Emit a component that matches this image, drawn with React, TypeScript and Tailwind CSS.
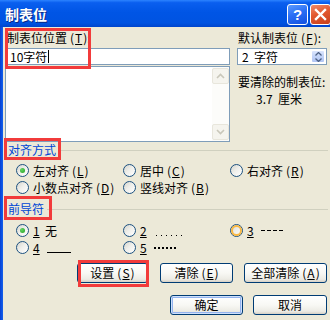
import React from "react";

function U({ c }: { c: string }) {
  return <span className="underline underline-offset-[1px] decoration-1">{c}</span>;
}

function Mn({ c }: { c: string }) {
  return (
    <span className="ml-[3px]">
      (<span className="px-[1px]"><U c={c} /></span>)
    </span>
  );
}

function Radio({ checked, hover }: { checked?: boolean; hover?: boolean }) {
  return (
    <span className="relative inline-flex w-[13px] h-[13px] shrink-0 items-center justify-center rounded-full border border-[#1c5180] bg-[linear-gradient(135deg,#d4d4cc_0%,#eeeeea_45%,#ffffff_100%)]">
      {hover && <span className="absolute inset-0 rounded-full border-2 border-[#f9b945]" />}
      {checked && (
        <span className="relative w-[5px] h-[5px] rounded-full bg-[radial-gradient(circle_at_35%_35%,#63d463,#21a121)]" />
      )}
    </span>
  );
}

function Btn({ cls, children, def }: { cls: string; children: React.ReactNode; def?: boolean }) {
  return (
    <div
      className={
        "h-[20px] shrink-0 rounded-[3px] border border-[#003c74] flex items-center justify-center text-[12px] leading-[12px] text-black bg-[linear-gradient(180deg,#ffffff_0%,#f8f8f4_50%,#ecebe4_85%,#d6d0c5_100%)] " +
        (def ? "shadow-[inset_0_0_0_1px_#cee0fb,inset_0_0_0_2px_#94b3ee] " : "") +
        cls
      }
    >
      {children}
    </div>
  );
}

export default function App() {
  return (
    <div className="relative w-[330px] h-[320px] overflow-hidden bg-[#ece9d8] font-['Noto_Sans_CJK_SC','Liberation_Sans',sans-serif] text-[12px] text-black">
      {/* Title bar */}
      <div className="h-[27px] flex items-center justify-between bg-[linear-gradient(180deg,#2c83ff_0%,#0a5fef_10%,#0055e5_45%,#0053e1_85%,#0045cc_100%)]">
        <span className="pl-[5px] text-[14px] leading-[14px] font-bold text-white [text-shadow:1px_1px_0_#0a2a88]">
          制表位
        </span>
        <div className="flex items-center gap-[2px] mr-[-1px] mt-[1px]">
          <div className="w-[21px] h-[21px] rounded-[3px] border border-white flex items-center justify-center bg-[linear-gradient(160deg,#5b9bff_0%,#2a6ff5_45%,#1450e0_100%)] text-white font-bold text-[15px] leading-[15px] font-['Liberation_Sans',sans-serif]">
            ?
          </div>
          <div className="w-[21px] h-[21px] rounded-[3px] border border-white flex items-center justify-center bg-[linear-gradient(160deg,#f28a6a_0%,#e2582f_45%,#c8401c_100%)]">
            <svg width="13" height="13" viewBox="0 0 13 13">
              <path d="M2 2 L11 11 M11 2 L2 11" stroke="white" strokeWidth="2.4" strokeLinecap="square" />
            </svg>
          </div>
        </div>
      </div>

      <div className="flex h-[293px]">
        {/* left frame */}
        <div className="w-[3px] shrink-0 bg-[linear-gradient(90deg,#0a3fd0_0%,#0a55e6_60%,#1a5fe8_100%)]" />
        <div className="flex-1 flex flex-col pl-[2px]">
          {/* top section */}
          <div className="flex h-[115px]">
            <div className="w-[225px] flex flex-col">
              <div className="h-[21px] pt-[5px] pl-[2px] leading-[12px] whitespace-nowrap">
                制表位位置<Mn c="T" />:
              </div>
              <div className="h-[17px] border border-[#7f9db9] bg-white flex items-center pl-[4px] leading-[12px]">
                <span>10字符</span>
                <span className="ml-[1px] w-px h-[13px] bg-black" />
              </div>
              <div className="mt-[1px] h-[76px] border border-[#7f9db9] bg-white flex justify-end">
                <div className="w-[17px] flex flex-col justify-between bg-[#fcfcfa] py-[1px]">
                  <div className="h-[16px] rounded-[2px] border border-[#e8e6dc] bg-[#f5f4ee] flex items-center justify-center">
                    <svg width="9" height="6" viewBox="0 0 9 6">
                      <path d="M1 5 L4.5 1.5 L8 5" fill="none" stroke="#c9c7ba" strokeWidth="1.6" />
                    </svg>
                  </div>
                  <div className="h-[16px] rounded-[2px] border border-[#e8e6dc] bg-[#f5f4ee] flex items-center justify-center">
                    <svg width="9" height="6" viewBox="0 0 9 6">
                      <path d="M1 1 L4.5 4.5 L8 1" fill="none" stroke="#c9c7ba" strokeWidth="1.6" />
                    </svg>
                  </div>
                </div>
              </div>
            </div>
            <div className="ml-[7px] w-[90px] flex flex-col">
              <div className="h-[21px] pt-[5px] pl-[1px] leading-[12px] whitespace-nowrap">
                默认制表位<Mn c="F" />:
              </div>
              <div className="h-[17px] border border-[#7f9db9] bg-white flex items-center justify-between pl-[4px] pr-[1px] leading-[12px]">
                <span>2&nbsp;&nbsp;字符</span>
                <div className="w-[14px] h-[13px] rounded-[2px] border border-white bg-[linear-gradient(180deg,#dbe6fd_0%,#c2d3f8_50%,#b1c5f3_100%)] flex flex-col items-center justify-center gap-[2px]">
                  <svg width="7" height="4" viewBox="0 0 7 4">
                    <path d="M0.5 3.5 L3.5 0.5 L6.5 3.5" fill="none" stroke="#4d6185" strokeWidth="1.3" />
                  </svg>
                  <svg width="7" height="4" viewBox="0 0 7 4">
                    <path d="M0.5 0.5 L3.5 3.5 L6.5 0.5" fill="none" stroke="#4d6185" strokeWidth="1.3" />
                  </svg>
                </div>
              </div>
              <div className="mt-[8px] pl-[1px] leading-[17px] whitespace-nowrap">
                要清除的制表位:
                <br />
                <span className="ml-[18px]">3.7&nbsp;&nbsp;厘米</span>
              </div>
            </div>
          </div>

          {/* 对齐方式 */}
          <div className="mt-[2px] h-[12px] flex items-center pl-[3px]">
            <span className="leading-[12px] text-[#0046d5] whitespace-nowrap">对齐方式</span>
            <div className="ml-[3px] mr-[2px] flex-1 h-px bg-[#d0d0bf]" />
          </div>
          <div className="mt-[8px] ml-[11px] grid grid-cols-[107px_107px_1fr] gap-y-[4px]">
            <div className="flex items-center gap-[4px] h-[13px]">
              <Radio checked />
              <span className="leading-[12px] whitespace-nowrap">左对齐<Mn c="L" /></span>
            </div>
            <div className="flex items-center gap-[4px] h-[13px]">
              <Radio />
              <span className="leading-[12px] whitespace-nowrap">居中<Mn c="C" /></span>
            </div>
            <div className="flex items-center gap-[4px] h-[13px]">
              <Radio />
              <span className="leading-[12px] whitespace-nowrap">右对齐<Mn c="R" /></span>
            </div>
            <div className="flex items-center gap-[4px] h-[13px]">
              <Radio />
              <span className="leading-[12px] whitespace-nowrap">小数点对齐<Mn c="D" /></span>
            </div>
            <div className="flex items-center gap-[4px] h-[13px]">
              <Radio />
              <span className="leading-[12px] whitespace-nowrap">竖线对齐<Mn c="B" /></span>
            </div>
          </div>

          {/* 前导符 */}
          <div className="mt-[9px] h-[12px] flex items-center pl-[3px]">
            <span className="leading-[12px] text-[#0046d5] whitespace-nowrap">前导符</span>
            <div className="ml-[3px] mr-[2px] flex-1 h-px bg-[#d0d0bf]" />
          </div>
          <div className="mt-[9px] ml-[11px] grid grid-cols-[107px_107px_1fr] gap-y-[4px]">
            <div className="flex items-center gap-[4px] h-[13px]">
              <Radio checked />
              <span className="leading-[12px] whitespace-nowrap">
                <U c="1" />&nbsp;&nbsp;无
              </span>
            </div>
            <div className="flex items-center gap-[4px] h-[13px]">
              <Radio />
              <span className="leading-[12px] whitespace-nowrap flex items-end">
                <U c="2" />
                <span className="ml-[9px] mb-[1px] flex gap-[4px]">
                  <span className="w-px h-px bg-black" />
                  <span className="w-px h-px bg-black" />
                  <span className="w-px h-px bg-black" />
                  <span className="w-px h-px bg-black" />
                  <span className="w-px h-px bg-black" />
                  <span className="w-px h-px bg-black" />
                </span>
              </span>
            </div>
            <div className="flex items-center gap-[4px] h-[13px]">
              <Radio hover />
              <span className="leading-[12px] whitespace-nowrap flex items-center">
                <U c="3" />
                <span className="ml-[7px] flex gap-[2px]">
                  <span className="w-[4px] h-px bg-black" />
                  <span className="w-[4px] h-px bg-black" />
                  <span className="w-[4px] h-px bg-black" />
                  <span className="w-[4px] h-px bg-black" />
                </span>
              </span>
            </div>
            <div className="flex items-center gap-[4px] h-[13px]">
              <Radio />
              <span className="leading-[12px] whitespace-nowrap flex items-end">
                <U c="4" />
                <span className="ml-[7px] inline-block w-[24px] h-px bg-black mb-[1px]" />
              </span>
            </div>
            <div className="flex items-center gap-[4px] h-[13px]">
              <Radio />
              <span className="leading-[12px] whitespace-nowrap flex items-center">
                <U c="5" />
                <span className="ml-[7px] flex gap-[2px]">
                  <span className="w-[2px] h-[2px] bg-black" />
                  <span className="w-[2px] h-[2px] bg-black" />
                  <span className="w-[2px] h-[2px] bg-black" />
                  <span className="w-[2px] h-[2px] bg-black" />
                  <span className="w-[2px] h-[2px] bg-black" />
                  <span className="w-[2px] h-[2px] bg-black" />
                </span>
              </span>
            </div>
          </div>

          {/* action buttons */}
          <div className="mt-[9px] ml-[72px] flex">
            <Btn cls="w-[71px]">设置<Mn c="S" /></Btn>
            <Btn cls="ml-[12px] w-[73px]">清除<Mn c="E" /></Btn>
            <Btn cls="ml-[11px] w-[83px]">全部清除<Mn c="A" /></Btn>
          </div>
          <div className="mt-[12px] ml-[165px] flex">
            <Btn cls="w-[73px]" def>确定</Btn>
            <Btn cls="ml-[10px] w-[74px]">取消</Btn>
          </div>
        </div>
      </div>

      {/* red annotation boxes */}
      <div className="absolute left-[5px] top-[28px] w-[86px] h-[41px] border-[3px] border-[#f23b3b]" />
      <div className="absolute left-[4px] top-[138px] w-[57px] h-[22px] border-[3px] border-[#f23b3b]" />
      <div className="absolute left-[4px] top-[196px] w-[48px] h-[24px] border-[3px] border-[#f23b3b]" />
      <div className="absolute left-[78px] top-[260px] w-[71px] h-[27px] border-[3px] border-[#f23b3b]" />
    </div>
  );
}
